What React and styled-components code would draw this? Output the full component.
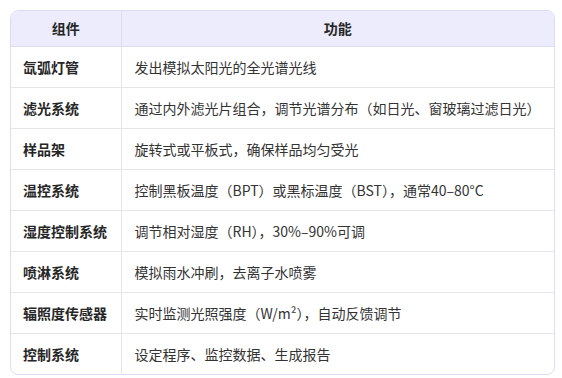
import React from "react";
import styled, { createGlobalStyle } from "styled-components";

const Global = createGlobalStyle`
  html, body { margin: 0; padding: 0; background: #ffffff; }
  body { font-family: "Noto Sans CJK SC", "Noto Sans", sans-serif; }
  *, *::before, *::after { box-sizing: border-box; }
`;

const Page = styled.div`
  padding: 10px 7px 0 10px;
`;

const Frame = styled.div`
  border: 1px solid #dcdcf2;
  border-radius: 8px;
  overflow: hidden;
  width: 545px;
`;

const Table = styled.table`
  width: 100%;
  border-collapse: collapse;
  table-layout: fixed;
  font-size: 14px;
  color: #333333;
`;

const Col = styled.col`
  width: ${(p) => p.$w || "auto"};
`;

const HeadCell = styled.th`
  background: #ececfd;
  height: 35px;
  padding: 0 12px;
  font-weight: 700;
  text-align: center;
  color: #262626;
  border-bottom: 1px solid #dcdcf2;
  border-left: ${(p) => (p.$first ? "none" : "1px solid #dcdcf2")};
`;

const Row = styled.tr`
  & + & td { border-top: 1px solid #e6e6e6; }
`;

const Cell = styled.td`
  height: 41px;
  padding: 0 4px 0 ${(p) => (p.$first ? "12px" : "13px")};
  font-weight: ${(p) => (p.$first ? 700 : 400)};
  color: ${(p) => (p.$first ? "#262626" : "#333333")};
  border-left: ${(p) => (p.$first ? "none" : "1px solid #e6e6e6")};
  white-space: nowrap;
  vertical-align: middle;
`;

const rows = [
  ["氙弧灯管", "发出模拟太阳光的全光谱光线"],
  ["滤光系统", "通过内外滤光片组合，调节光谱分布（如日光、窗玻璃过滤日光）"],
  ["样品架", "旋转式或平板式，确保样品均匀受光"],
  ["温控系统", "控制黑板温度（BPT）或黑标温度（BST），通常40–80°C"],
  ["湿度控制系统", "调节相对湿度（RH），30%–90%可调"],
  ["喷淋系统", "模拟雨水冲刷，去离子水喷雾"],
  ["辐照度传感器", "实时监测光照强度（W/m²），自动反馈调节"],
  ["控制系统", "设定程序、监控数据、生成报告"],
];

export default function App() {
  return (
    <>
      <Global />
      <Page>
        <Frame>
          <Table>
            <colgroup>
              <Col $w="110px" />
              <Col />
            </colgroup>
            <thead>
              <tr>
                <HeadCell $first>组件</HeadCell>
                <HeadCell>功能</HeadCell>
              </tr>
            </thead>
            <tbody>
              {rows.map(([a, b]) => (
                <Row key={a}>
                  <Cell $first>{a}</Cell>
                  <Cell>{b}</Cell>
                </Row>
              ))}
            </tbody>
          </Table>
        </Frame>
      </Page>
    </>
  );
}
